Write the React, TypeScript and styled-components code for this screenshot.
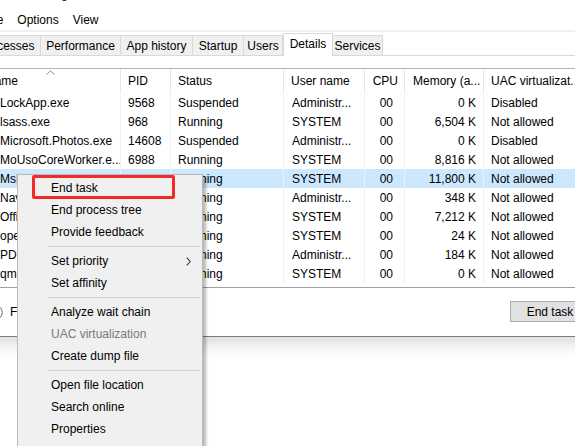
import React from "react";
import styled, { createGlobalStyle } from "styled-components";

const GlobalStyle = createGlobalStyle`
  html, body {
    margin: 0;
    background: #ffffff;
    overflow: hidden;
    font-family: "Liberation Sans", Arial, sans-serif;
    font-size: 12px;
    color: #000000;
  }
`;

const COLS = "141px 50px 113px 81px 40px 79px 1fr";

type Column = {
  title: string;
  right?: boolean;
  headPad: number;
  rowPad: number;
};

const columns: Column[] = [
  { title: "Name", headPad: 6, rowPad: 20 },
  { title: "PID", headPad: 7, rowPad: 7 },
  { title: "Status", headPad: 7, rowPad: 7 },
  { title: "User name", headPad: 7, rowPad: 8 },
  { title: "CPU", right: true, headPad: 6, rowPad: 11 },
  { title: "Memory (a...", headPad: 8, rowPad: 7, right: false },
  { title: "UAC virtualizat...", headPad: 7, rowPad: 7 },
];

type Proc = {
  cells: string[];
  selected?: boolean;
};

const processes: Proc[] = [
  { cells: ["LockApp.exe", "9568", "Suspended", "Administr...", "00", "0 K", "Disabled"] },
  { cells: ["lsass.exe", "968", "Running", "SYSTEM", "00", "6,504 K", "Not allowed"] },
  { cells: ["Microsoft.Photos.exe", "14608", "Suspended", "Administr...", "00", "0 K", "Disabled"] },
  { cells: ["MoUsoCoreWorker.e...", "6988", "Running", "SYSTEM", "00", "8,816 K", "Not allowed"] },
  { cells: ["MsMpEng.exe", "4120", "Running", "SYSTEM", "00", "11,800 K", "Not allowed"], selected: true },
  { cells: ["NavApp.exe", "7724", "Running", "Administr...", "00", "348 K", "Not allowed"] },
  { cells: ["OfficeClickToRun.exe", "4396", "Running", "SYSTEM", "00", "7,212 K", "Not allowed"] },
  { cells: ["openvpnserv.exe", "4452", "Running", "SYSTEM", "00", "24 K", "Not allowed"] },
  { cells: ["PDIService.exe", "9012", "Running", "Administr...", "00", "184 K", "Not allowed"] },
  { cells: ["qmbsrv.exe", "3380", "Running", "SYSTEM", "00", "0 K", "Not allowed"] },
];

const tabs = [
  { label: "Processes", w: 69 },
  { label: "Performance", w: 80 },
  { label: "App history", w: 72 },
  { label: "Startup", w: 51 },
  { label: "Users", w: 39 },
  { label: "Details", w: 50, active: true },
  { label: "Services", w: 50 },
];

type MenuEntry = { label?: string; sep?: boolean; disabled?: boolean; sub?: boolean; marked?: boolean };

const menuEntries: MenuEntry[] = [
  { label: "End task", marked: true },
  { label: "End process tree" },
  { label: "Provide feedback" },
  { sep: true },
  { label: "Set priority", sub: true },
  { label: "Set affinity" },
  { sep: true },
  { label: "Analyze wait chain" },
  { label: "UAC virtualization", disabled: true },
  { label: "Create dump file" },
  { sep: true },
  { label: "Open file location" },
  { label: "Search online" },
  { label: "Properties" },
];

export default function App() {
  return (
    <Page>
      <GlobalStyle />
      <Window>
        <TitleBar>Task Manager</TitleBar>
        <MenuBar>
          <MenuBarItem>File</MenuBarItem>
          <MenuBarItem>Options</MenuBarItem>
          <MenuBarItem>View</MenuBarItem>
        </MenuBar>

        <TabStrip>
          {tabs.map((t) => (
            <Tab key={t.label} $w={t.w} $active={!!t.active}>
              {t.label}
            </Tab>
          ))}
        </TabStrip>

        <ListView>
          <HeaderRow>
            {columns.map((c, i) => (
              <HeadCell key={c.title} $pad={c.headPad} $right={!!c.right}>
                {i === 0 ? (
                  <SortArrow width="9" height="5" viewBox="0 0 9 5">
                    <path d="M0.5 4.5 L4.5 0.8 L8.5 4.5" fill="none" stroke="#8c8c8c" strokeWidth="1" />
                  </SortArrow>
                ) : null}
                {c.title}
              </HeadCell>
            ))}
          </HeaderRow>

          <Rows>
            {processes.map((p) => (
              <Row key={p.cells[0]} $selected={!!p.selected}>
                {p.cells.map((v, i) => (
                  <Cell
                    key={i}
                    $pad={columns[i].rowPad}
                    $right={i === 4 || i === 5}
                  >
                    {v}
                  </Cell>
                ))}
              </Row>
            ))}
          </Rows>
        </ListView>

        <Footer>
          <FewerDetails>
            <svg width="15" height="15" viewBox="0 0 15 15">
              <circle cx="7.5" cy="7.5" r="6.8" fill="none" stroke="#6a6a6a" strokeWidth="1" />
              <path d="M4.5 8.8 L7.5 5.8 L10.5 8.8" fill="none" stroke="#6a6a6a" strokeWidth="1" />
            </svg>
            Fewer details
          </FewerDetails>
          <Button>End task</Button>
        </Footer>
      </Window>

      <ContextMenu>
        {menuEntries.map((m, i) =>
          m.sep ? (
            <Separator key={i} />
          ) : (
            <MenuItem key={i} $disabled={!!m.disabled}>
              {m.label}
              {m.sub ? (
                <SubArrow width="5" height="9" viewBox="0 0 5 9">
                  <path d="M0.7 0.7 L4.2 4.5 L0.7 8.3" fill="none" stroke="#3a3a3a" strokeWidth="1.1" />
                </SubArrow>
              ) : null}
              {m.marked ? <Highlight /> : null}
            </MenuItem>
          )
        )}
      </ContextMenu>
    </Page>
  );
}

const Page = styled.div`
  position: relative;
  width: 575px;
  height: 446px;
  overflow: hidden;
`;

const Window = styled.div`
  width: 650px;
  margin: -22px 0 0 -40px;
  background: #ffffff;
  border-bottom: 1px solid #7c7c7c;
  box-shadow: 0 6px 16px rgba(0, 0, 0, 0.16);
`;

const TitleBar = styled.div`
  height: 32px;
  line-height: 32px;
  padding-left: 43px;
  color: #000;
`;

const MenuBar = styled.div`
  display: flex;
  height: 20px;
  align-items: center;
  padding-left: 17px;
  border-bottom: 2px solid #f0f0f0;
`;

const MenuBarItem = styled.span`
  padding: 0 7px;
`;

const TabStrip = styled.div`
  display: flex;
  align-items: flex-end;
  height: 23px;
  padding-left: 12px;
  border-bottom: 1px solid #d9d9d9;
`;

const Tab = styled.div<{ $w: number; $active: boolean }>`
  box-sizing: border-box;
  width: ${(p) => p.$w}px;
  height: ${(p) => (p.$active ? 23 : 20)}px;
  margin-bottom: ${(p) => (p.$active ? -1 : 0)}px;
  display: flex;
  align-items: center;
  justify-content: center;
  white-space: nowrap;
  background: ${(p) => (p.$active ? "#ffffff" : "#f0f0f0")};
  border: 1px solid #d9d9d9;
  border-left-width: ${(p) => (p.$active ? 1 : 0)}px;
  border-bottom: none;
  padding-bottom: ${(p) => (p.$active ? 3 : 0)}px;

  &:first-child {
    border-left-width: 1px;
  }
`;

const ListView = styled.div`
  margin: 12px 20px 0 20px;
  border-top: 1px solid #b4b4b4;
  border-bottom: 1px solid #a0a0a0;
  padding-bottom: 4px;
`;

const HeaderRow = styled.div`
  display: grid;
  grid-template-columns: ${COLS};
  height: 23px;
  margin-bottom: 1px;
`;

const HeadCell = styled.div<{ $pad: number; $right: boolean }>`
  position: relative;
  box-sizing: border-box;
  display: flex;
  align-items: center;
  justify-content: ${(p) => (p.$right ? "flex-end" : "flex-start")};
  padding: 0 ${(p) => (p.$right ? p.$pad : 2)}px 0 ${(p) => (p.$right ? 2 : p.$pad)}px;
  border-right: 1px solid #e5e5e5;
  white-space: nowrap;
  overflow: hidden;
`;

const SortArrow = styled.svg`
  position: absolute;
  top: 1px;
  left: 66px;
`;

const Rows = styled.div`
  display: flex;
  flex-direction: column;
`;

const Row = styled.div<{ $selected: boolean }>`
  display: grid;
  grid-template-columns: ${COLS};
  height: 19px;
  background: ${(p) => (p.$selected ? "#cce8ff" : "transparent")};
`;

const Cell = styled.div<{ $pad: number; $right: boolean }>`
  box-sizing: border-box;
  display: flex;
  align-items: center;
  justify-content: ${(p) => (p.$right ? "flex-end" : "flex-start")};
  padding: 0 ${(p) => (p.$right ? p.$pad : 2)}px 0 ${(p) => (p.$right ? 2 : p.$pad)}px;
  border-right: 1px solid #eef2f8;
  white-space: nowrap;
  overflow: hidden;
`;

const Footer = styled.div`
  display: flex;
  align-items: center;
  justify-content: space-between;
  height: 48px;
  padding: 0 20px 0 28px;
`;

const FewerDetails = styled.div`
  display: flex;
  align-items: center;
  gap: 7px;
`;

const Button = styled.div`
  box-sizing: border-box;
  width: 80px;
  height: 21px;
  display: flex;
  align-items: center;
  justify-content: center;
  background: #e1e1e1;
  border: 1px solid #adadad;
  margin-top: -1px;
`;

const ContextMenu = styled.div`
  position: absolute;
  left: 17px;
  top: 174px;
  width: 186px;
  height: 300px;
  box-sizing: border-box;
  padding-top: 2px;
  background: #f0f0f0;
  border: 1px solid #b9b9b9;
  box-shadow: 3px 3px 3px rgba(0, 0, 0, 0.28);
`;

const MenuItem = styled.div<{ $disabled: boolean }>`
  position: relative;
  height: 22px;
  display: flex;
  align-items: center;
  padding-left: 33px;
  color: ${(p) => (p.$disabled ? "#7a7a7a" : "#000000")};
`;

const SubArrow = styled.svg`
  position: absolute;
  right: 11px;
  top: 7px;
`;

const Separator = styled.div`
  height: 7px;
  margin: 0 2px 0 29px;
  display: flex;
  align-items: center;

  &::after {
    content: "";
    flex: 1;
    height: 1px;
    background: #d5d5d5;
  }
`;

const Highlight = styled.div`
  position: absolute;
  left: 14px;
  right: 27px;
  top: -2px;
  bottom: 0;
  border: 3px solid #f22a2a;
  border-radius: 2px;
  pointer-events: none;
`;
